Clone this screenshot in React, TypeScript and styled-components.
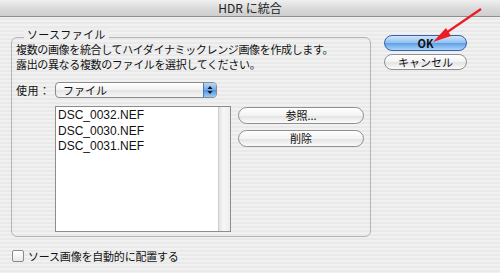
import styled, {createGlobalStyle} from 'styled-components'

const GlobalStyle = createGlobalStyle`
  html, body {
    margin: 0;
    padding: 0;
    background: #ededed;
  }
  * {
    box-sizing: border-box;
  }
`

const files = ['DSC_0032.NEF', 'DSC_0030.NEF', 'DSC_0031.NEF']

export default function App() {
  return (
    <>
      <GlobalStyle />
      <Window>
        <TitleBar>HDR に統合</TitleBar>
        <Body>
          <LeftColumn>
            <Group>
              <Legend>ソースファイル</Legend>
              <Description>
                複数の画像を統合してハイダイナミックレンジ画像を作成します。
                <br />
                露出の異なる複数のファイルを選択してください。
              </Description>
              <UseRow>
                <Label>使用：</Label>
                <Select>
                  <SelectText>ファイル</SelectText>
                  <SelectArrows>
                    <svg width="6" height="10" viewBox="0 0 6 10">
                      <path d="M3 1 L5.5 4 L0.5 4 Z" fill="#111" />
                      <path d="M3 9 L5.5 6 L0.5 6 Z" fill="#111" />
                    </svg>
                  </SelectArrows>
                </Select>
              </UseRow>
              <ListRow>
                <FileList>
                  <Items>
                    {files.map(f => (
                      <Item key={f}>{f}</Item>
                    ))}
                  </Items>
                  <ScrollTrack />
                </FileList>
                <SideButtons>
                  <AquaButton>参照...</AquaButton>
                  <AquaButton>削除</AquaButton>
                </SideButtons>
              </ListRow>
            </Group>
            <CheckRow>
              <CheckBox />
              <CheckLabel>ソース画像を自動的に配置する</CheckLabel>
            </CheckRow>
          </LeftColumn>
          <RightColumn>
            <DialogButton $primary>OK</DialogButton>
            <DialogButton>キャンセル</DialogButton>
          </RightColumn>
        </Body>
        <Arrow width="500" height="60" viewBox="0 0 500 60">
          <line x1="481" y1="9" x2="443" y2="35" stroke="#ec1c24" strokeWidth="2.2" />
          <path d="M433 42 L446 28 L451 36 Z" fill="#ec1c24" />
        </Arrow>
      </Window>
    </>
  )
}

const font = `"Noto Sans CJK JP", "Liberation Sans", sans-serif`

const Window = styled.div`
  position: relative;
  width: 500px;
  height: 273px;
  overflow: hidden;
  font-family: ${font};
  color: #111;
  background: repeating-linear-gradient(
    to bottom,
    #f1f1f1 0px,
    #f1f1f1 2px,
    #e9e9e9 2px,
    #e9e9e9 4px
  );
`

const TitleBar = styled.div`
  height: 17px;
  line-height: 16px;
  text-align: center;
  font-size: 12px;
  color: #222;
  background: linear-gradient(to bottom, #f0f0f0, #d8d8d8 60%, #cdcdcd);
  border-bottom: 1px solid #8e8e8e;
`

const Body = styled.div`
  display: flex;
  align-items: flex-start;
  padding: 18px 0 0 11px;
`

const LeftColumn = styled.div`
  display: flex;
  flex-direction: column;
  width: 360px;
`

const Group = styled.div`
  position: relative;
  margin-top: 2px;
  height: 200px;
  border: 1px solid #b4b4b4;
  border-radius: 6px;
  padding: 4px 4px 0 4px;
`

const Legend = styled.div`
  position: absolute;
  top: -10.5px;
  left: 12px;
  padding: 0 3px;
  font-size: 11px;
  letter-spacing: 0.3px;
  line-height: 12px;
  background: #eeeeee;
`

const Description = styled.div`
  font-size: 11px;
  letter-spacing: -0.35px;
  line-height: 15px;
`

const UseRow = styled.div`
  display: flex;
  align-items: center;
  margin-top: 10px;
`

const Label = styled.div`
  width: 39px;
  font-size: 11px;
  letter-spacing: 0.5px;
`

const Select = styled.div`
  display: flex;
  width: 162px;
  height: 16px;
  border: 1px solid #8a8a8a;
  border-radius: 4px;
  overflow: hidden;
  background: linear-gradient(to bottom, #ffffff, #f2f2f2 50%, #e4e4e4 51%, #f6f6f6);
`

const SelectText = styled.div`
  flex: 1;
  padding-left: 7px;
  font-size: 11px;
  line-height: 14px;
`

const SelectArrows = styled.div`
  width: 13px;
  display: flex;
  align-items: center;
  justify-content: center;
  border-left: 1px solid #4a78b8;
  background: linear-gradient(to bottom, #b9d9f7, #6fa9e6 50%, #4f91dc 51%, #9ccbf5);
`

const ListRow = styled.div`
  display: flex;
  align-items: flex-start;
  margin-top: 8px;
  padding-left: 39px;
`

const FileList = styled.div`
  display: flex;
  width: 176px;
  height: 126px;
  border: 1px solid #8c8c8c;
  background: #fff;
`

const Items = styled.div`
  flex: 1;
  padding: 1px 0 0 2px;
`

const Item = styled.div`
  font-family: "Liberation Sans", "Noto Sans CJK JP", sans-serif;
  font-size: 12px;
  line-height: 15.5px;
`

const ScrollTrack = styled.div`
  width: 12px;
  border-left: 1px solid #cfcfcf;
  background: linear-gradient(to right, #e2e2e2, #f7f7f7 40%, #ededed);
`

const SideButtons = styled.div`
  display: flex;
  flex-direction: column;
  gap: 6px;
  margin-left: 7px;
  margin-top: 1px;
`

const AquaButton = styled.div`
  width: 126px;
  height: 17px;
  border: 1px solid #8f8f8f;
  border-radius: 9px;
  text-align: center;
  font-size: 11px;
  line-height: 15px;
  background: linear-gradient(to bottom, #ffffff, #f3f3f3 50%, #e2e2e2 51%, #fbfbfb);
`

const CheckRow = styled.div`
  display: flex;
  align-items: center;
  gap: 4px;
  margin-top: 11px;
  margin-left: 1px;
`

const CheckBox = styled.div`
  width: 12px;
  height: 12px;
  border: 1px solid #8a8a8a;
  border-radius: 2px;
  background: linear-gradient(to bottom, #ffffff, #e8e8e8);
`

const CheckLabel = styled.div`
  font-size: 11px;
  letter-spacing: -0.2px;
`

const RightColumn = styled.div`
  display: flex;
  flex-direction: column;
  gap: 3px;
  margin-left: 13px;
`

const DialogButton = styled.div<{$primary?: boolean}>`
  width: 83px;
  height: 16px;
  border-radius: 9px;
  text-align: center;
  font-size: 11px;
  font-weight: ${p => (p.$primary ? 700 : 400)};
  line-height: 14px;
  border: 1px solid ${p => (p.$primary ? '#3a62a6' : '#8f8f8f')};
  background: ${p =>
    p.$primary
      ? 'linear-gradient(to bottom, #cfe5fb, #8fc0f0 50%, #5e9fe6 51%, #a9d5fb)'
      : 'linear-gradient(to bottom, #ffffff, #f3f3f3 50%, #e2e2e2 51%, #fbfbfb)'};
`

const Arrow = styled.svg`
  position: absolute;
  top: 0;
  left: 0;
  pointer-events: none;
`
